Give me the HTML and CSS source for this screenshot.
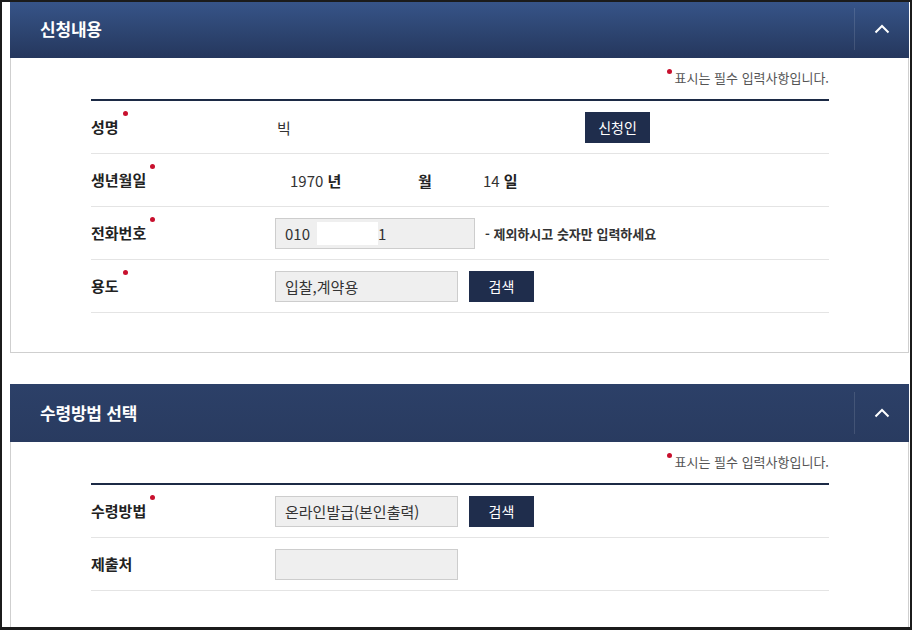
FILE: index.html
```html
<!DOCTYPE html>
<html lang="ko">
<head>
<meta charset="utf-8">
<link rel="stylesheet" href="styles.css">
</head>
<body>
<div class="frame">
  <section class="panel first">
    <header class="panel-head grad">
      <h2 class="panel-title">신청내용</h2>
      <button class="toggle" aria-label="접기">
        <svg width="16" height="10" viewBox="0 0 16 10"><path d="M1.5 8.5 L8 2 L14.5 8.5" fill="none" stroke="#fff" stroke-width="2"/></svg>
      </button>
    </header>
    <div class="panel-body">
      <p class="note"><span class="dot note-dot"></span>표시는 필수 입력사항입니다.</p>
      <div class="form">
        <div class="row">
          <div class="label">성명<span class="dot"></span></div>
          <div class="value">
            <span class="name">빅</span>
            <button class="btn">신청인</button>
          </div>
        </div>
        <div class="row">
          <div class="label">생년월일<span class="dot"></span></div>
          <div class="value birth">
            <span class="year">1970 <b>년</b></span>
            <span class="month"><b>월</b></span>
            <span class="day">14 <b>일</b></span>
          </div>
        </div>
        <div class="row">
          <div class="label">전화번호<span class="dot"></span></div>
          <div class="value">
            <div class="field wide">010<span class="mask"></span>1</div>
            <span class="hint">- 제외하시고 숫자만 입력하세요</span>
          </div>
        </div>
        <div class="row">
          <div class="label">용도<span class="dot"></span></div>
          <div class="value">
            <div class="field">입찰,계약용</div>
            <button class="btn">검색</button>
          </div>
        </div>
      </div>
    </div>
  </section>

  <section class="panel second">
    <header class="panel-head flat">
      <h2 class="panel-title">수령방법 선택</h2>
      <button class="toggle" aria-label="접기">
        <svg width="16" height="10" viewBox="0 0 16 10"><path d="M1.5 8.5 L8 2 L14.5 8.5" fill="none" stroke="#fff" stroke-width="2"/></svg>
      </button>
    </header>
    <div class="panel-body">
      <p class="note"><span class="dot note-dot"></span>표시는 필수 입력사항입니다.</p>
      <div class="form">
        <div class="row">
          <div class="label">수령방법<span class="dot"></span></div>
          <div class="value">
            <div class="field">온라인발급(본인출력)</div>
            <button class="btn">검색</button>
          </div>
        </div>
        <div class="row">
          <div class="label">제출처</div>
          <div class="value">
            <div class="field"></div>
          </div>
        </div>
      </div>
    </div>
  </section>
</div>
</body>
</html>
```

FILE: styles.css
```css
* { box-sizing: border-box; }
html, body { margin: 0; padding: 0; background: #fff; }
body {
  font-family: "Noto Sans CJK KR", "Liberation Sans", sans-serif;
  color: #222;
}
.frame {
  width: 912px;
  height: 630px;
  border: 2px solid #1b1b1b;
  border-bottom-width: 3px;
  padding: 0 1px 0 8px;
  overflow: hidden;
  background: #fff;
}
.panel.first { margin-top: -2px; }
.panel.second { margin-top: 31px; }

.panel-head {
  height: 58px;
  display: flex;
  align-items: center;
  justify-content: space-between;
  padding-left: 30px;
}
.panel-head.grad { background: linear-gradient(#37558a 0%, #2e4673 50%, #25375d 100%); }
.panel-head.flat { background: linear-gradient(#2c4068, #293b60); }
.panel-title {
  margin: 0;
  color: #fff;
  font-size: 17px;
  font-weight: 700;
  letter-spacing: -0.2px;
  line-height: 20px;
}
.toggle {
  width: 55px;
  height: 42px;
  border: 0;
  border-left: 1px solid rgba(255,255,255,0.12);
  background: transparent;
  display: flex;
  align-items: center;
  justify-content: center;
  padding: 0;
}

.panel-body {
  border: 1px solid #cfcfcf;
  border-top: 0;
  padding: 10px 79px 39px 80px;
}
.note {
  margin: 0 0 11px;
  height: 20px;
  line-height: 20px;
  text-align: right;
  font-size: 13px;
  color: #555;
}
.dot {
  display: inline-block;
  width: 5px;
  height: 5px;
  border-radius: 50%;
  background: #c8102e;
  position: relative;
  top: -17px;
  margin-left: 4px;
}
.note-dot { margin: 0 3px 0 0; top: -9px; }

.form { border-top: 2px solid #1c2a45; }
.row {
  height: 53px;
  display: flex;
  align-items: center;
  border-bottom: 1px solid #e4e4e4;
}
.label {
  width: 184px;
  flex: none;
  font-size: 15px;
  font-weight: 700;
  color: #222;
  line-height: 20px;
  height: 20px;
}
.value {
  display: flex;
  align-items: center;
  font-size: 15px;
  color: #333;
}
.name { width: 310px; padding-left: 2px; }
.btn {
  height: 31px;
  width: 65px;
  border: 0;
  background: #1f2d4c;
  color: #fff;
  font-family: inherit;
  font-size: 14px;
  padding: 0;
}
.birth b { font-weight: 700; color: #222; }
.year { width: 143px; padding-left: 15px; }
.month { width: 65px; }
.field {
  width: 183px;
  height: 31px;
  border: 1px solid #cdcdcd;
  background: #efefef;
  padding-left: 9px;
  display: flex;
  align-items: center;
  margin-right: 11px;
  color: #333;
}
.field.wide { width: 200px; margin-right: 10px; }
.mask {
  display: inline-block;
  width: 61px;
  height: 23px;
  background: #fff;
  margin-left: 7px;
}
.hint {
  font-size: 13px;
  font-weight: 700;
  color: #333;
}
```
